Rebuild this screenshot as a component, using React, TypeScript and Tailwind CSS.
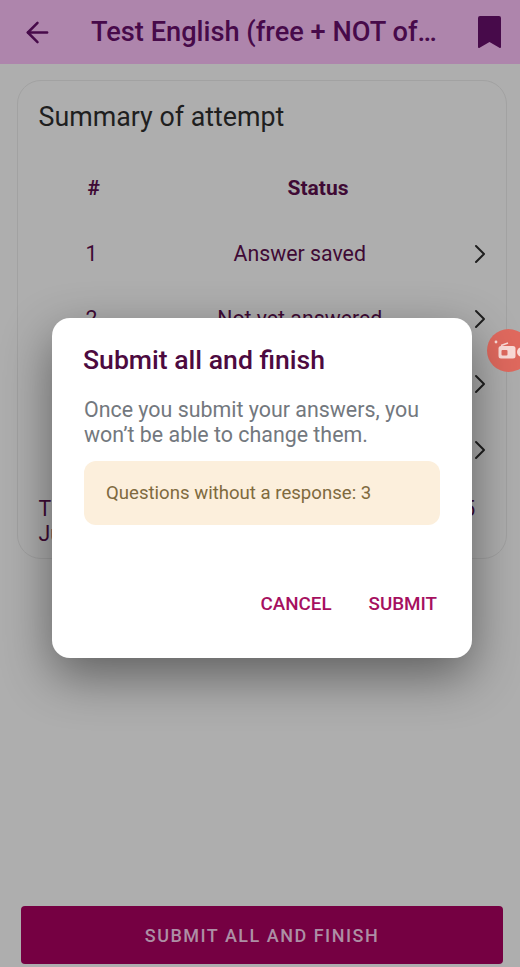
import { ArrowLeft, ChevronRight } from "lucide-react";

const rows = [
  { id: "1", status: "Answer saved" },
  { id: "2", status: "Not yet answered" },
  { id: "3", status: "Not yet answered" },
  { id: "4", status: "Not yet answered" },
];

const SummaryCard = () => {
  return (
    <div className="ml-[17px] mr-[13px] mt-4 h-[479px] rounded-[24px] border border-[#a2a2a2] pl-[20.5px] pr-[10px] pt-[20px]">
      <h2 className="text-[26.8px] leading-[32px] text-[#1f1f1f]">Summary of attempt</h2>
      <div className="mb-[12px] mt-[36px] flex h-[40px] items-center text-[21px] font-bold text-[#3f0a35]">
        <span className="ml-[49px] w-[30px]">#</span>
        <span className="ml-[170px]">Status</span>
      </div>
      {rows.map((row) => (
        <div key={row.id} className="flex h-[65.3px] items-center text-[21.3px] text-[#3f0a35]">
          <span className="ml-[47px] w-[30px]">{row.id}</span>
          <span className="flex-1 pl-[20px] text-center">{row.status}</span>
          <ChevronRight size={32} strokeWidth={1.5} className="text-[#1f1f1f]" />
        </div>
      ))}
      <p className="mt-[14px] w-[446px] text-[21.3px] leading-[25px] text-[#3f0a35]">
        This attempt must be submitted by Saturday 5 June
      </p>
    </div>
  );
};

const RecorderBubble = () => {
  return (
    <div className="absolute left-[487px] top-[329px] flex h-[43px] w-[43px] items-center rounded-full bg-[#e0695e]">
      <svg width="33" height="24" viewBox="0 0 33 24" fill="none" className="ml-[7px]">
        <circle cx="2" cy="3" r="1.4" fill="#fbdcd8" />
        <path d="M7 6.5 14 4" stroke="#fbdcd8" strokeWidth="1.5" />
        <rect x="4.5" y="7" width="17" height="12.5" rx="2.5" fill="#fbdcd8" />
        <rect x="7.5" y="11" width="6" height="5.5" rx="1" fill="#e0695e" />
        <circle cx="28" cy="13" r="5" fill="#fbdcd8" />
      </svg>
    </div>
  );
};

const SubmitDialog = () => {
  return (
    <div className="absolute left-[52px] top-[318px] h-[340px] w-[420px] rounded-[18px] bg-white pl-[31px] pr-[32px] pt-[26px] shadow-[0_18px_50px_rgba(0,0,0,0.45)]">
      <h3 className="text-[26.6px] font-medium leading-[32px] text-[#4d0a3f]">Submit all and finish</h3>
      <p className="ml-[1px] mt-[21px] text-[21.4px] leading-[25px] text-[#73787e]">
        Once you submit your answers, you won’t be able to change them.
      </p>
      <div className="ml-[1px] mt-[14px] flex h-[64px] items-center rounded-[12px] bg-[#fcefdc] pl-[22px] pt-[1px] text-[18.6px] text-[#7f6a3e]">
        Questions without a response: 3
      </div>
      <div className="mt-[66px] flex justify-end gap-[37px] pr-[3px] text-[18.8px] font-medium leading-[26px] text-[#a6105f]">
        <span>CANCEL</span>
        <span>SUBMIT</span>
      </div>
    </div>
  );
};

export default function App() {
  return (
    <div className="relative flex h-[967px] w-[520px] flex-col overflow-hidden bg-[#aeaeae] font-['Roboto',sans-serif]">
      <header className="flex h-[64px] items-center bg-[#ae85ac] text-[#470a4a]">
        <ArrowLeft size={33} strokeWidth={1.8} className="ml-[21px]" />
        <h1 className="ml-[37px] w-[350px] whitespace-nowrap text-[27.2px] font-medium">Test English (free + NOT of…</h1>
        <svg width="23" height="32" viewBox="0 0 23 32" className="ml-auto mr-[19px] shrink-0" fill="currentColor">
          <path d="M2 0h19a2 2 0 0 1 2 2v29a1 1 0 0 1-1.6.8L11.5 26 1.6 31.8A1 1 0 0 1 0 31V2a2 2 0 0 1 2-2z" />
        </svg>
      </header>

      <SummaryCard />

      <button className="ml-[21px] mr-[17px] mb-[3px] mt-auto h-[58px] rounded-[4px] bg-[#750042] text-[18px] font-medium tracking-[1.5px] text-[#ad8fa5]">
        SUBMIT ALL AND FINISH
      </button>

      <RecorderBubble />
      <SubmitDialog />
    </div>
  );
}
